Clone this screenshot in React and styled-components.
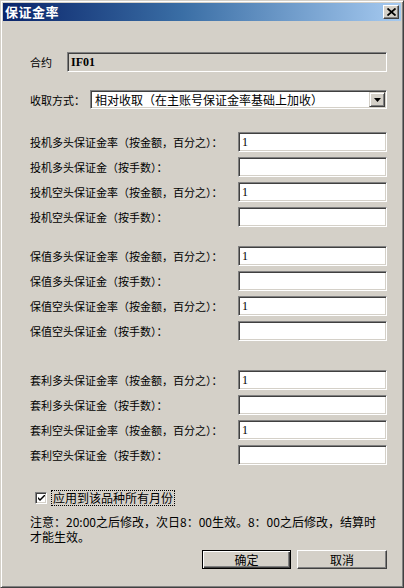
import React from "react";
import styled, { createGlobalStyle } from "styled-components";

const GlobalStyle = createGlobalStyle`
  html, body {
    margin: 0;
    padding: 0;
    background: #d4d0c8;
  }
  body {
    font-family: "Noto Sans CJK SC", "Liberation Sans", sans-serif;
    color: #000;
  }
`;

const groups = [
  { name: "投机", mt: 23 },
  { name: "保值", mt: 19 },
  { name: "套利", mt: 29 },
];

const App = () => {
  return (
    <>
      <GlobalStyle />
      <Window>
        <TitleBar>
          <Title>保证金率</Title>
          <CloseButton>
            <svg width="9" height="8" viewBox="0 0 9 8">
              <path d="M0.5 0.5 L8.5 7.5 M8.5 0.5 L0.5 7.5" stroke="#000" strokeWidth="1.8" />
            </svg>
          </CloseButton>
        </TitleBar>

        <Content>
          <Row $mt={31}>
            <Label $w={37}>合约</Label>
            <TextBox $disabled $flex>IF01</TextBox>
          </Row>

          <Row $mt={18}>
            <Label $w={60}>收取方式：</Label>
            <Select>
              <SelectText>相对收取（在主账号保证金率基础上加收）</SelectText>
              <DropButton>
                <svg width="7" height="4" viewBox="0 0 7 4">
                  <path d="M0 0 H7 L3.5 4 Z" fill="#000" />
                </svg>
              </DropButton>
            </Select>
          </Row>

          {groups.map((g) => (
            <Group key={g.name} $mt={g.mt}>
              <Row>
                <Label>{g.name}多头保证金率（按金额，百分之）：</Label>
                <TextBox>1</TextBox>
              </Row>
              <Row>
                <Label>{g.name}多头保证金（按手数）：</Label>
                <TextBox />
              </Row>
              <Row>
                <Label>{g.name}空头保证金率（按金额，百分之）：</Label>
                <TextBox>1</TextBox>
              </Row>
              <Row>
                <Label>{g.name}空头保证金（按手数）：</Label>
                <TextBox />
              </Row>
            </Group>
          ))}

          <CheckRow>
            <CheckBox>
              <svg width="7" height="7" viewBox="0 0 7 7">
                <path d="M0 2 L0 4 L2 6 L7 1 L7 -1 L2 4 Z" fill="#000" />
              </svg>
            </CheckBox>
            <CheckLabel>应用到该品种所有月份</CheckLabel>
          </CheckRow>

          <Note>
            注意：20:00之后修改，次日8：00生效。8：00之后修改，结算时
            <br />
            才能生效。
          </Note>

          <ButtonBar>
            <Button $default>确定</Button>
            <Button $w={90}>取消</Button>
          </ButtonBar>
        </Content>
      </Window>
    </>
  );
};

export default App;

// window frame
const Window = styled.div`
  box-sizing: border-box;
  width: 404px;
  height: 588px;
  background: #d4d0c8;
  border: 1px solid;
  border-color: #d4d0c8 #404040 #404040 #d4d0c8;
  box-shadow: inset 1px 1px #fff, inset -1px -1px #808080;
  padding: 2px;
  display: flex;
  flex-direction: column;
`;

// title bar
const TitleBar = styled.div`
  height: 18px;
  display: flex;
  align-items: center;
  justify-content: space-between;
  padding: 0 2px 0 2px;
  background: linear-gradient(to right, #0a246a 0%, #3a6ea5 45%, #a6caf0 100%);
`;

const Title = styled.span`
  color: #fff;
  font-size: 13px;
  font-weight: bold;
  line-height: 18px;
  letter-spacing: 0.5px;
`;

const CloseButton = styled.div`
  box-sizing: border-box;
  width: 16px;
  height: 14px;
  background: #d4d0c8;
  border: 1px solid;
  border-color: #fff #404040 #404040 #fff;
  box-shadow: inset -1px -1px #808080;
  display: flex;
  align-items: center;
  justify-content: center;
`;

// body
const Content = styled.div`
  display: flex;
  flex-direction: column;
  padding: 0 14px 0 27px;
`;

const Group = styled.div`
  display: flex;
  flex-direction: column;
  gap: 5px;
  margin-top: ${(p) => p.$mt || 0}px;
`;

const Row = styled.div`
  display: flex;
  align-items: center;
  margin-top: ${(p) => p.$mt || 0}px;
`;

const Label = styled.span`
  font-size: 11px;
  line-height: 14px;
  white-space: nowrap;
  ${(p) => (p.$w ? `width: ${p.$w}px; flex: none;` : "flex: 1;")}
`;

const TextBox = styled.div`
  box-sizing: border-box;
  height: 20px;
  ${(p) => (p.$flex ? "flex: 1;" : "width: 149px; flex: none;")}
  background: ${(p) => (p.$disabled ? "#d4d0c8" : "#fff")};
  border: 1px solid;
  border-color: #808080 #fff #fff #808080;
  box-shadow: inset 1px 1px #404040, inset -1px -1px #d4d0c8;
  padding: 0 3px;
  font-family: "Liberation Serif", serif;
  font-size: 12px;
  font-weight: ${(p) => (p.$disabled ? "bold" : "normal")};
  line-height: 18px;
`;

// combobox
const Select = styled.div`
  box-sizing: border-box;
  flex: 1;
  height: 19px;
  background: #fff;
  border: 1px solid;
  border-color: #808080 #fff #fff #808080;
  box-shadow: inset 1px 1px #404040, inset -1px -1px #d4d0c8;
  padding: 1px;
  display: flex;
  align-items: center;
`;

const SelectText = styled.span`
  flex: 1;
  padding-left: 3px;
  font-size: 12px;
  line-height: 15px;
  white-space: nowrap;
`;

const DropButton = styled.div`
  box-sizing: border-box;
  width: 16px;
  height: 15px;
  background: #d4d0c8;
  border: 1px solid;
  border-color: #d4d0c8 #404040 #404040 #d4d0c8;
  box-shadow: inset 1px 1px #fff, inset -1px -1px #808080;
  display: flex;
  align-items: center;
  justify-content: center;
`;

// checkbox
const CheckRow = styled.div`
  display: flex;
  align-items: center;
  height: 16px;
  margin-top: 25px;
  padding-left: 5px;
`;

const CheckBox = styled.div`
  box-sizing: border-box;
  width: 12px;
  height: 12px;
  background: #fff;
  border: 1px solid;
  border-color: #808080 #fff #fff #808080;
  box-shadow: inset 1px 1px #404040, inset -1px -1px #d4d0c8;
  display: flex;
  align-items: center;
  justify-content: center;
`;

const CheckLabel = styled.span`
  margin-left: 4px;
  padding: 0 1px;
  border: 1px dotted #000;
  font-size: 12px;
  line-height: 14px;
`;

// note
const Note = styled.div`
  margin-top: 8px;
  font-size: 12px;
  line-height: 15px;
  white-space: nowrap;
`;

// buttons
const ButtonBar = styled.div`
  display: flex;
  justify-content: flex-end;
  gap: 6px;
  margin-top: 6px;
`;

const Button = styled.div`
  box-sizing: border-box;
  width: ${(p) => p.$w || 89}px;
  height: 19px;
  background: #d4d0c8;
  border: 1px solid;
  border-color: ${(p) => (p.$default ? "#000" : "#fff #404040 #404040 #fff")};
  box-shadow: ${(p) =>
    p.$default
      ? "inset 1px 1px #fff, inset -1px -1px #404040, inset -2px -2px #808080"
      : "inset -1px -1px #808080"};
  display: flex;
  align-items: center;
  justify-content: center;
  font-size: 12px;
`;
